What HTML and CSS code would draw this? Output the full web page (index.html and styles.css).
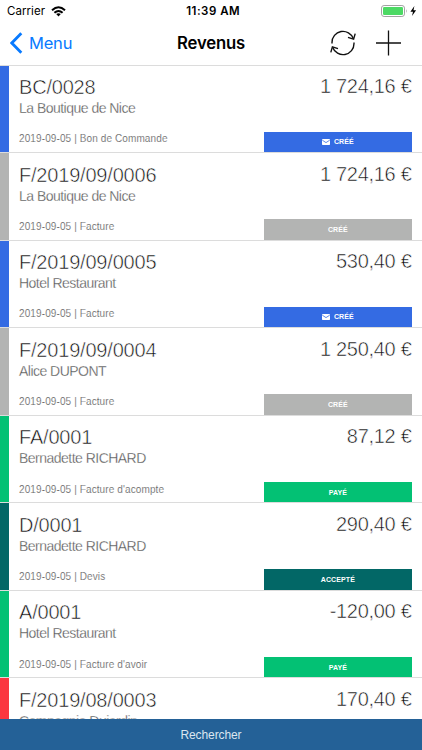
FILE: index.html
```html
<!DOCTYPE html>
<html lang="fr">
<head>
<meta charset="utf-8">
<title>Revenus</title>
<link rel="stylesheet" href="styles.css">
</head>
<body>
<div class="app">
  <header>
    <div class="status">
      <div class="carrier"><span>Carrier</span>
        <svg width="15" height="11" viewBox="0 0 15 11"><g fill="none" stroke="#000" stroke-width="2"><path d="M1 4.2Q7.5-1.8 14 4.2"/><path d="M3.4 6.8Q7.5 3.1 11.6 6.8"/></g><path d="M5.2 8.1Q7.5 6.3 9.8 8.1L7.5 10.5z"/></svg>
      </div>
      <div class="clock">11:39 AM</div>
      <div class="power">
        <svg width="37" height="12" viewBox="0 0 37 12"><rect x=".5" y=".5" width="23" height="11" rx="2.6" fill="#fff" stroke="#a2a2a2"/><rect x="2" y="2" width="20" height="8" rx="1.2" fill="#4cd964"/><path d="M25 4q1.5 2 0 4z" fill="#a2a2a2"/><path d="M33.4 1L29.4 6.7H32L31 11L35.1 5.2H32.5z"/></svg>
      </div>
    </div>
    <nav>
      <div class="back"><svg width="13" height="22" viewBox="0 0 13 22"><path d="M11.3 1.3L1.8 11L11.3 20.7" fill="none" stroke="#087aff" stroke-width="2.8"/></svg><span>Menu</span></div>
      <h1>Revenus</h1>
      <div class="actions">
        <svg width="26" height="26" viewBox="0 0 26 26" fill="none" stroke="#111" stroke-width="1.4"><path d="M2 13.5V12.5A11 11 0 0 1 23.3 8.5M24 12.5V13.5A11 11 0 0 1 2.7 17.5"/><path d="M18 7.4L23.6 9.2L25.2 3.6M8 18.6L2.4 16.8L.8 22.4"/></svg>
        <svg width="26" height="26" viewBox="0 0 26 26" stroke="#111" stroke-width="1.3"><path d="M12.5 .5V25.5M0 13H25"/></svg>
      </div>
    </nav>
  </header>
  <main>
    <article class="row blue"><div class="info"><h2>BC/0028</h2><p class="client">La Boutique de Nice</p><p class="meta">2019-09-05 | Bon de Commande</p></div><div class="side"><div class="amount">1 724,16 €</div><div class="badge"><svg width="8" height="6" viewBox="0 0 8 6"><rect width="8" height="6" rx=".7" fill="#fff"/><path d="M.3 1.2L4 3.6L7.7 1.2" fill="none" stroke="#346be3" stroke-width=".8"/></svg>CRÉÉ</div></div></article>
    <article class="row gray"><div class="info"><h2>F/2019/09/0006</h2><p class="client">La Boutique de Nice</p><p class="meta">2019-09-05 | Facture</p></div><div class="side"><div class="amount">1 724,16 €</div><div class="badge">CRÉÉ</div></div></article>
    <article class="row blue"><div class="info"><h2>F/2019/09/0005</h2><p class="client">Hotel Restaurant</p><p class="meta">2019-09-05 | Facture</p></div><div class="side"><div class="amount">530,40 €</div><div class="badge"><svg width="8" height="6" viewBox="0 0 8 6"><rect width="8" height="6" rx=".7" fill="#fff"/><path d="M.3 1.2L4 3.6L7.7 1.2" fill="none" stroke="#346be3" stroke-width=".8"/></svg>CRÉÉ</div></div></article>
    <article class="row gray"><div class="info"><h2>F/2019/09/0004</h2><p class="client">Alice DUPONT</p><p class="meta">2019-09-05 | Facture</p></div><div class="side"><div class="amount">1 250,40 €</div><div class="badge">CRÉÉ</div></div></article>
    <article class="row green"><div class="info"><h2>FA/0001</h2><p class="client">Bernadette RICHARD</p><p class="meta">2019-09-05 | Facture d'acompte</p></div><div class="side"><div class="amount">87,12 €</div><div class="badge">PAYÉ</div></div></article>
    <article class="row teal"><div class="info"><h2>D/0001</h2><p class="client">Bernadette RICHARD</p><p class="meta">2019-09-05 | Devis</p></div><div class="side"><div class="amount">290,40 €</div><div class="badge">ACCEPTÉ</div></div></article>
    <article class="row green"><div class="info"><h2>A/0001</h2><p class="client">Hotel Restaurant</p><p class="meta">2019-09-05 | Facture d'avoir</p></div><div class="side"><div class="amount">-120,00 €</div><div class="badge">PAYÉ</div></div></article>
    <article class="row red"><div class="info"><h2>F/2019/08/0003</h2><p class="client">Compagnie Dujardin</p></div><div class="side"><div class="amount">170,40 €</div></div></article>
  </main>
  <footer>Rechercher</footer>
</div>
</body>
</html>
```
FILE: styles.css
```css
* { box-sizing: border-box; }
body { margin: 0; background: #fff; font-family: "Liberation Sans", sans-serif; }
h1, h2, p { margin: 0; }
svg { display: block; flex: none; }
.app { width: 422px; height: 750px; display: flex; flex-direction: column; overflow: hidden; }
header { height: 65.6px; flex: none; border-bottom: 1px solid #dcdcdc; font-family: Inter, sans-serif; }
.status { height: 22px; display: grid; grid-template-columns: 1fr auto 1fr; align-items: center; padding: 0 4px 0 7px; font-size: 11.5px; line-height: 22px; }
.carrier { display: flex; gap: 6px; align-items: center; letter-spacing: .05px; }
.clock { font-weight: 600; letter-spacing: .5px; transform: translateX(.7px); }
.power { display: flex; justify-content: flex-end; }
nav { height: 42px; display: grid; grid-template-columns: 1fr auto 1fr; align-items: center; padding: 0 20px 0 10px; }
.back { display: flex; align-items: center; gap: 6px; color: #087aff; font-size: 16.5px; letter-spacing: -.2px; }
h1 { font-size: 16.7px; font-weight: 600; letter-spacing: -.2px; transform: translateX(5px); }
.actions { display: flex; justify-content: flex-end; gap: 20px; }
main { flex: 1; min-height: 0; overflow: hidden; }
.row { height: 87.55px; display: flex; justify-content: space-between; border-bottom: 1px solid #dcdcdc; padding-right: 10.5px; }
.info { border-left: 9px solid var(--tone); padding: 9.4px 0 0 10px; white-space: nowrap; }
h2, .amount { font-size: 20px; line-height: 24px; font-weight: 400; color: #0c0c0c; letter-spacing: -.2px; -webkit-text-stroke: .55px #fff; }
.client { font-size: 14px; line-height: 18px; color: #505050; letter-spacing: -.52px; -webkit-text-stroke: .28px #fff; }
.meta { margin-top: 15.4px; font-size: 10px; line-height: 14px; color: #686868; letter-spacing: .11px; -webkit-text-stroke: .12px #fff; }
.side { width: 147.3px; display: flex; flex-direction: column; justify-content: space-between; }
.amount { padding-top: 8.4px; text-align: right; white-space: nowrap; letter-spacing: -.3px; }
.badge { height: 20.5px; display: flex; align-items: center; justify-content: center; gap: 4px; background: var(--tone); color: #fff; font: bold 7px "Liberation Sans", sans-serif; letter-spacing: .1px; }
.blue { --tone: #346be3; }
.gray { --tone: #b3b4b3; }
.green { --tone: #03c174; }
.teal { --tone: #026766; }
.red { --tone: #fb3640; }
footer { height: 31px; flex: none; background: #246197; color: #dbe6f0; text-align: center; font-size: 12px; line-height: 32px; letter-spacing: -.1px; }
```
